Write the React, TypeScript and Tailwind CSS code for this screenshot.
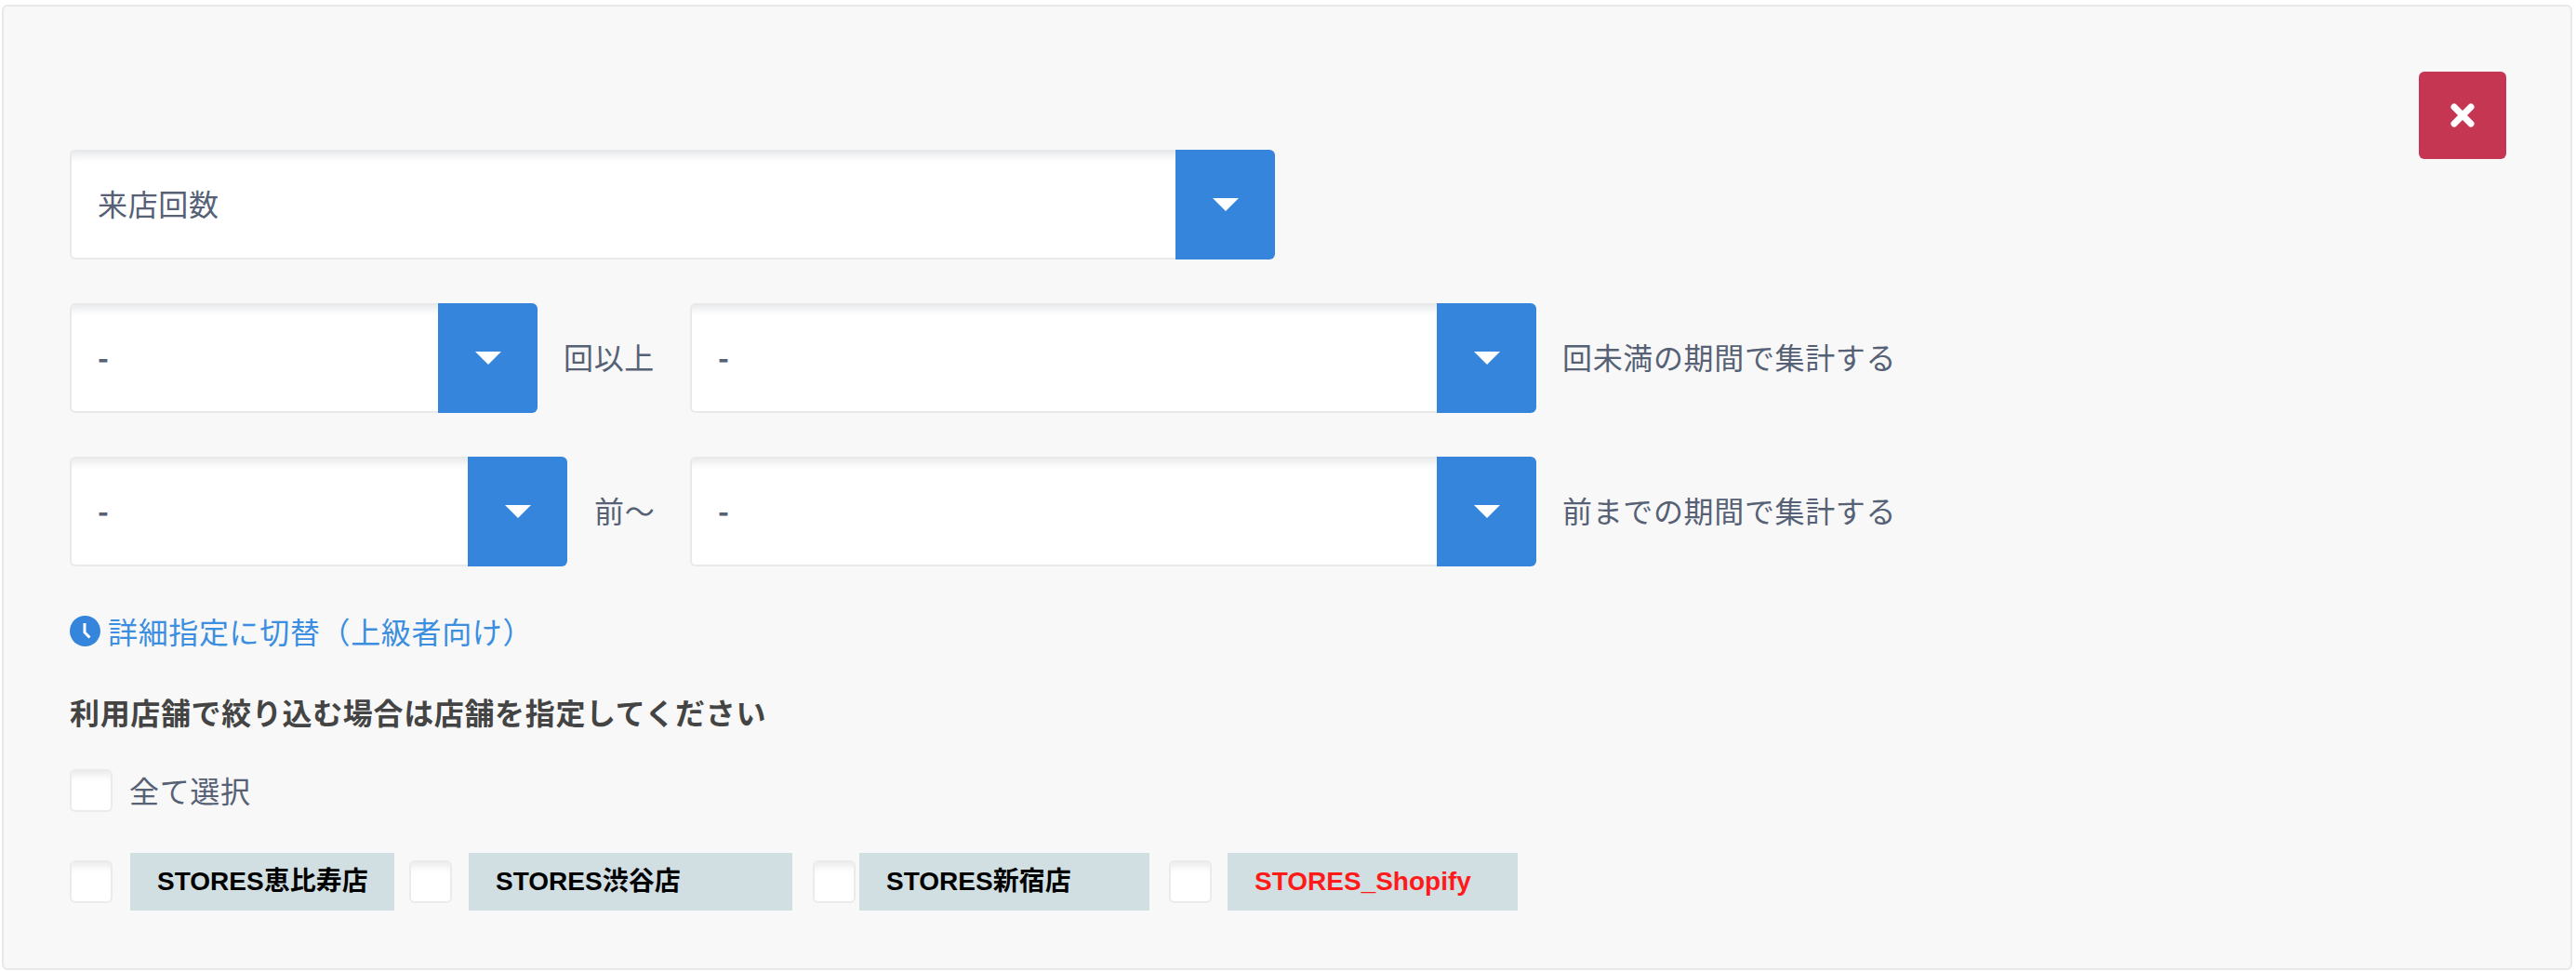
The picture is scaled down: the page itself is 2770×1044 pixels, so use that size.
import React from 'react';

const FONT = "font-['Noto_Sans_CJK_JP','Noto_Sans',sans-serif]";

interface SelectBoxProps {
  label: string;
  widthClass: string;
}

const SelectBox: React.FC<SelectBoxProps> = ({ label, widthClass }) => (
  <div className={`flex h-[118px] shrink-0 ${widthClass}`}>
    <div
      className={`flex flex-1 items-center rounded-l-[6px] border-2 border-r-0 border-[#e9e9ea] bg-white pb-[4px] pl-[28px] text-[32px] text-[#566176] shadow-[inset_0_14px_10px_-10px_#e6e7e9] ${label === '-' ? 'font-bold' : ''}`}
    >
      {label}
    </div>
    <div className="flex w-[107px] items-center justify-center rounded-r-[6px] bg-[#3485db]">
      <svg width="30" height="16" viewBox="0 0 30 16">
        <polygon points="1,1 29,1 15,15" fill="#ffffff" />
      </svg>
    </div>
  </div>
);

const CheckBox: React.FC = () => (
  <span className="block h-[46px] w-[46px] shrink-0 rounded-[6px] border-2 border-[#ebebeb] bg-white shadow-[inset_0_12px_8px_-8px_#e9e9e9]" />
);

const stores = [
  { name: 'STORES恵比寿店', boxClass: '', tagClass: 'ml-[19px] w-[284px] text-black' },
  { name: 'STORES渋谷店', boxClass: 'ml-[16px]', tagClass: 'ml-[18px] w-[348px] text-black' },
  { name: 'STORES新宿店', boxClass: 'ml-[22px]', tagClass: 'ml-[4px] w-[312px] text-black' },
  { name: 'STORES_Shopify', boxClass: 'ml-[21px]', tagClass: 'ml-[17px] w-[312px] text-[#ff1a1a]' },
];

export default function App() {
  return (
    <div className={`w-[2770px] pl-[2px] pt-[5px] tracking-[0.65px] ${FONT}`}>
      <div className="relative h-[1038px] w-[2764px] rounded-[6px] border-2 border-[#e8e8e9] bg-[#f8f8f8] pl-[71px] pt-[154px]">
        <button className="absolute right-[69px] top-[70px] flex h-[94px] w-[94px] items-center justify-center rounded-[6px] bg-[#c53652]">
          <svg width="26" height="26" viewBox="0 0 26 26">
            <path d="M4 4 L22 22 M22 4 L4 22" stroke="#ffffff" strokeWidth="7" strokeLinecap="round" />
          </svg>
        </button>

        <SelectBox label="来店回数" widthClass="w-[1296px]" />

        <div className="mt-[47px] flex items-center">
          <SelectBox label="-" widthClass="w-[503px]" />
          <span className="ml-[28px] w-[136px] pb-[4px] text-[32px] text-[#566176]">回以上</span>
          <SelectBox label="-" widthClass="w-[910px]" />
          <span className="ml-[28px] pb-[4px] text-[32px] text-[#566176]">回未満の期間で集計する</span>
        </div>

        <div className="mt-[47px] flex items-center">
          <SelectBox label="-" widthClass="w-[535px]" />
          <span className="ml-[29px] w-[103px] pb-[4px] text-[32px] text-[#566176]">前〜</span>
          <SelectBox label="-" widthClass="w-[910px]" />
          <span className="ml-[28px] pb-[4px] text-[32px] text-[#566176]">前までの期間で集計する</span>
        </div>

        <a className="mt-[48px] flex h-[42px] items-center text-[#3b8ee0]">
          <svg width="33" height="33" viewBox="0 0 33 33" className="shrink-0">
            <circle cx="16.5" cy="16.5" r="16.5" fill="#3485db" />
            <path d="M16 8 V18 L21.5 23.5" fill="none" stroke="#ffffff" strokeWidth="3" />
          </svg>
          <span className="ml-[8px] text-[32px] leading-none">詳細指定に切替（上級者向け）</span>
        </a>

        <p className="mt-[42px] h-[48px] text-[32px] font-bold leading-[48px] text-[#444444]">
          利用店舗で絞り込む場合は店舗を指定してください
        </p>

        <label className="mt-[36px] flex items-center">
          <CheckBox />
          <span className="ml-[18px] pb-[2px] text-[32px] text-[#566176]">全て選択</span>
        </label>

        <div className="mt-[42px] flex items-center">
          {stores.map((store) => (
            <div key={store.name} className={`flex items-center ${store.boxClass}`}>
              <CheckBox />
              <span
                className={`flex h-[62px] items-center bg-[#d1dfe3] pl-[29px] font-['Liberation_Sans','Noto_Sans_CJK_JP',sans-serif] text-[28px] font-bold tracking-normal ${store.tagClass}`}
              >
                {store.name}
              </span>
            </div>
          ))}
        </div>
      </div>
    </div>
  );
}
